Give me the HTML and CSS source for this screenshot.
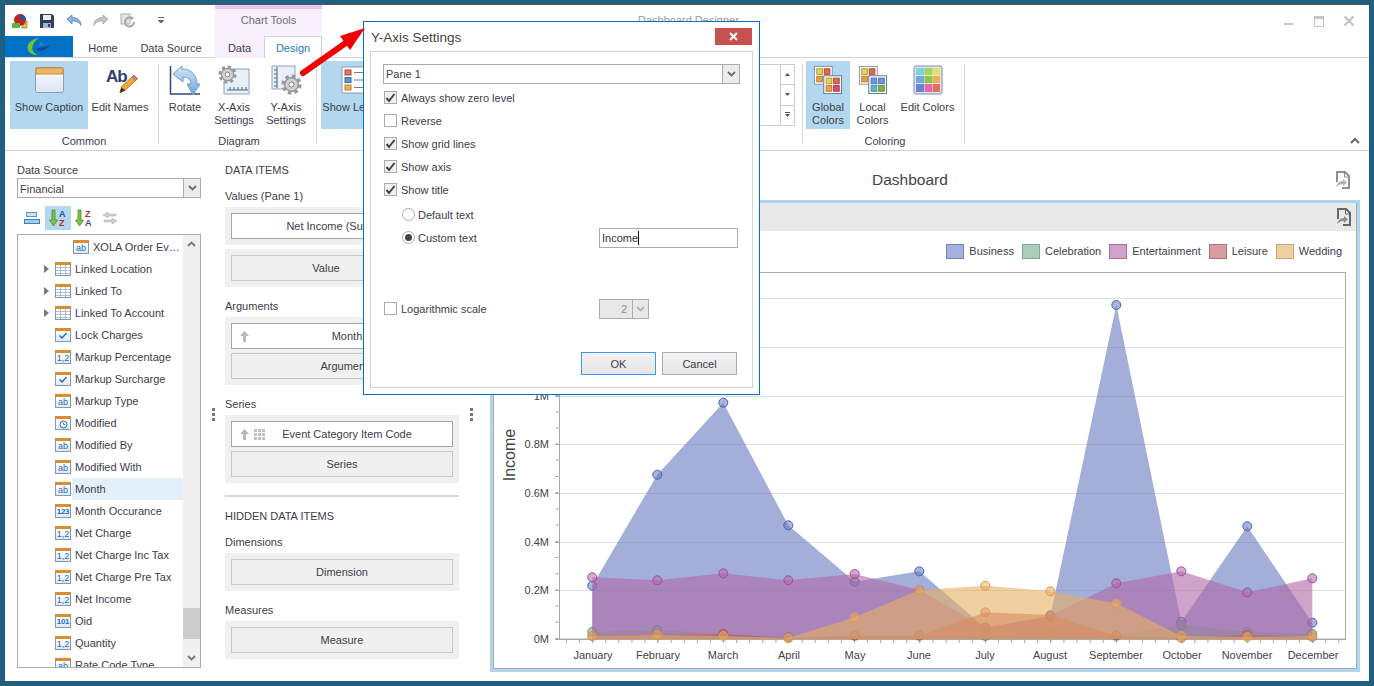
FILE: index.html
```html
<!DOCTYPE html>
<html lang="en">
<head>
    <meta charset="UTF-8">
    <title>Dashboard Designer</title>
    <link rel="stylesheet" href="styles.css">
</head>
<body>

<svg class="defs" width="0" height="0">
    <defs>
        <linearGradient id="gBlue" x1="0" y1="0" x2="0" y2="1"><stop offset="0" stop-color="#d6e6f7"/><stop offset="1" stop-color="#6fa5dc"/></linearGradient>
        <linearGradient id="gWin" x1="0" y1="0" x2="0" y2="1"><stop offset="0" stop-color="#fff"/><stop offset="1" stop-color="#dbe3f2"/></linearGradient>
        <symbol id="gear" viewBox="0 0 24 24">
            <circle cx="12" cy="12" r="8" fill="#b4b4b4" stroke="#7d7d7d"/>
            <circle cx="12" cy="12" r="9.5" fill="none" stroke="#999" stroke-width="4" stroke-dasharray="4 3.46"/>
            <circle cx="12" cy="12" r="6.5" fill="#d2d2d2"/>
            <circle cx="12" cy="12" r="3" fill="#f4f4f4" stroke="#777"/>
        </symbol>
        <symbol id="export" viewBox="0 0 16 18">
            <path d="M2 11V1h8l4 4v12H7" fill="none" stroke="currentColor" stroke-width="2"/>
            <path d="M9.500 1v5h5" fill="none" stroke="currentColor"/>
            <path d="M1 16c1-4 4-6 7-6V8l4 3.500-4 3.500v-2c-3 0-5 1-7 3z" fill="currentColor" opacity=".7"/>
        </symbol>
    </defs>
</svg>

<div class="window">

    <div class="titlebar">
        <div class="qat">
            <svg class="qat-icon" viewBox="0 0 16 16"><circle cx="8" cy="7" r="6" fill="#c8201c"/><path d="M8 7V1a6 6 0 0 1 6 6z" fill="#2d4fa8"/><path d="M1 10h7v5H3a2.500 2.500 0 0 1-2-5z" fill="#58b347"/><path d="M9 15l6-7v7z" fill="#e9c046" stroke="#8a6a18" stroke-width=".6"/></svg>
            <svg class="qat-icon" viewBox="0 0 16 16"><path d="M1 1h12l2 2v12H1z" fill="#2f3f5c"/><rect x="4" y="2" width="8" height="5" fill="#e9eef5"/><rect x="4" y="10" width="8" height="5" fill="#a8b4c6"/><rect x="9" y="11" width="2" height="3" fill="#2f3f5c"/></svg>
            <svg class="qat-icon" viewBox="0 0 16 16"><path d="M1 6l5-4v2.500c5 0 9 2.500 9 8-1.500-3-4-4.500-9-4.500V11z" fill="#8db5dd" stroke="#4f82b5" stroke-width=".8"/></svg>
            <svg class="qat-icon" viewBox="0 0 16 16"><path d="M15 6l-5-4v2.500c-5 0-9 2.500-9 8 1.500-3 4-4.500 9-4.500V11z" fill="#c4c4c4" stroke="#a5a5a5" stroke-width=".8"/></svg>
            <svg class="qat-icon" viewBox="0 0 16 16"><rect x="1" y="1" width="9" height="10" fill="#e4e4e4" stroke="#b0b0b0"/><path d="M14 9a4.500 4.500 0 1 1-2-3.700" fill="none" stroke="#a8a8a8" stroke-width="2"/><path d="M10 3l4 1.500-2.500 3z" fill="#a8a8a8"/></svg>
            <svg class="qat-more" viewBox="0 0 8 7"><path d="M1 .5h6" stroke="#666"/><path d="M.5 3h7L4 6.500z" fill="#666"/></svg>
        </div>
        <div class="context-head">Chart Tools</div>
        <div class="app-title">Dashboard Designer</div>
        <div class="win-controls">
            <svg viewBox="0 0 12 12"><rect x="1" y="8" width="9" height="2" fill="#c4c4c4"/></svg>
            <svg viewBox="0 0 12 12"><rect x="1.500" y="1.500" width="9" height="10" fill="none" stroke="#c4c4c4"/><rect x="1" y="1" width="10" height="3" fill="#c4c4c4"/></svg>
            <svg viewBox="0 0 12 12"><path d="M1.500 1.500l9 9M10.500 1.500l-9 9" stroke="#c4c4c4" stroke-width="2.400"/></svg>
        </div>
    </div>

    <div class="tabs">
        <div class="app-logo">
            <svg width="26" height="18" viewBox="0 0 26 18"><path d="M13 0C5 1 0 6 2 12c1 3 5 5 10 5C7 15 5 11 7 7c1-3 3-5 6-7z" fill="#6fc23a"/><path d="M11 10c4 0 9-1 13-3-2 4-8 6-13 6z" fill="#17458f"/><path d="M14 4l5 3-6 1z" fill="#2c7fc4"/></svg>
        </div>
        <div class="tab tab-home">Home</div>
        <div class="tab tab-source">Data Source</div>
        <div class="tab tab-data">Data</div>
        <div class="tab tab-design">Design</div>
    </div>

    <div class="ribbon">
        <div class="rgroup rgroup-common">
            <div class="rbuttons">
                <div class="rbtn on w78">
                    <svg class="ricon" viewBox="0 0 32 30"><rect x="2.500" y="2.500" width="28" height="25" rx="2" fill="url(#gWin)" stroke="#8f9cb8"/><rect x="3" y="3" width="27" height="6" fill="#efb765" stroke="#c98d33"/></svg>
                    <span>Show Caption</span>
                </div>
                <div class="rbtn w64">
                    <div class="ab-icon"><b>Ab</b>
                        <svg viewBox="0 0 22 22"><path d="M17 1l4 4L7 18l-6 3 2-7z" fill="#f2a93b" stroke="#a5671b"/><path d="M17 1l4 4-2 2-4-4z" fill="#d98888" stroke="#8a5252" stroke-width=".7"/><path d="M1 21l2-6 4 3z" fill="#3a2a1a"/></svg>
                    </div>
                    <span>Edit Names</span>
                </div>
            </div>
            <div class="rlabel">Common</div>
        </div>
        <div class="rsep"></div>
        <div class="rgroup rgroup-diagram">
            <div class="rbuttons">
                <div class="rbtn w46">
                    <svg class="ricon" viewBox="0 0 32 30"><path d="M1.500 1v28h29.500" fill="none" stroke="#33477a" stroke-width="1.500"/><path d="M4 9l9-8v3c9 0 15 6 15 15h3l-7 11-6-11h4c0-4-3-7-8-7v5z" fill="url(#gBlue)" stroke="#6d9fcb"/></svg>
                    <span>Rotate</span>
                </div>
                <div class="rbtn w52">
                    <svg class="ricon" viewBox="0 0 32 30"><rect x="6" y="4" width="25" height="25" fill="#e9eff7" stroke="#8fa2bb"/><path d="M9 25h21M12 25v-3M16 25v-3M20 25v-3M24 25v-3M28 25v-3" stroke="#4d6684" fill="none"/><use href="#gear" x="0" y="0" width="19" height="19"/></svg>
                    <span>X-Axis<br>Settings</span>
                </div>
                <div class="rbtn w52">
                    <svg class="ricon" viewBox="0 0 32 30"><rect x="2" y="1" width="23" height="23" fill="#e9eff7" stroke="#8fa2bb"/><path d="M7 2v21M7 5H4M7 9H4M7 13H4M7 17H4M7 21H4" stroke="#4d6684" fill="none"/><use href="#gear" x="11" y="9" width="21" height="21"/></svg>
                    <span>Y-Axis<br>Settings</span>
                </div>
            </div>
            <div class="rlabel">Diagram</div>
        </div>
        <div class="rsep"></div>
        <div class="rgroup rgroup-layout">
            <div class="rbuttons">
                <div class="rbtn on w70">
                    <svg class="ricon" viewBox="0 0 32 30"><rect x="2" y="2" width="28" height="26" fill="#fff" stroke="#8f9cb8"/><rect x="5" y="5" width="6" height="5" fill="#e2786a" stroke="#a64a3f"/><rect x="5" y="12.500" width="6" height="5" fill="#5c97d6" stroke="#386ca6"/><rect x="5" y="20" width="6" height="5" fill="#eeb054" stroke="#b27f2e"/><path d="M14 7.500h12M14 15h12M14 22.500h12" stroke="#6d7f9c"/></svg>
                    <span>Show Legend</span>
                </div>
                <div class="gallery">
                    <div class="gallery-item">
                        <svg width="22" height="32" viewBox="0 0 22 32"><rect x=".5" y=".5" width="21" height="30" fill="#cfe2f5" stroke="#7f9ec4"/><path d="M1 30V18L14 10l7-7v27z" fill="#8dbbe6"/></svg>
                    </div>
                    <div class="gallery-spin">
                        <div><svg width="5" height="3" viewBox="0 0 5 3"><path d="M0 3h5L2.500 0z" fill="#555"/></svg></div>
                        <div><svg width="5" height="3" viewBox="0 0 5 3"><path d="M0 0h5L2.500 3z" fill="#555"/></svg></div>
                        <div><svg width="5" height="6" viewBox="0 0 5 6"><path d="M0 .5h5" stroke="#555"/><path d="M0 2h5L2.500 5z" fill="#555"/></svg></div>
                    </div>
                </div>
            </div>
            <div class="rlabel">&nbsp;</div>
        </div>
        <div class="rsep"></div>
        <div class="rgroup rgroup-coloring">
            <div class="rbuttons">
                <div class="rbtn on w44">
                    <svg class="ricon" viewBox="0 0 32 32"><rect x="1.500" y="1.500" width="19" height="19" fill="#fff" stroke="#7f90b5"/><rect x="4" y="4" width="6" height="6" fill="#e6d25a" stroke="#aa9a35"/><rect x="12" y="4" width="6" height="6" fill="#e2694d" stroke="#ad4a33"/><rect x="4" y="12" width="6" height="6" fill="#e9a043" stroke="#b27a2d"/><rect x="11.500" y="11.500" width="19" height="19" fill="#fff" stroke="#5c6f98"/><rect x="14" y="14" width="6" height="6" fill="#e6d25a" stroke="#aa9a35"/><rect x="22" y="14" width="6" height="6" fill="#e2694d" stroke="#ad4a33"/><rect x="14" y="22" width="6" height="6" fill="#e9a043" stroke="#b27a2d"/><rect x="22" y="22" width="6" height="6" fill="#dc4d6a" stroke="#a53850"/></svg>
                    <span>Global<br>Colors</span>
                </div>
                <div class="rbtn w45">
                    <svg class="ricon" viewBox="0 0 32 32"><rect x="1.500" y="1.500" width="19" height="19" fill="#fff" stroke="#7f90b5"/><rect x="4" y="4" width="6" height="6" fill="#e6d25a" stroke="#aa9a35"/><rect x="12" y="4" width="6" height="6" fill="#e2694d" stroke="#ad4a33"/><rect x="4" y="12" width="6" height="6" fill="#e9a043" stroke="#b27a2d"/><rect x="11.500" y="11.500" width="19" height="19" fill="#fff" stroke="#5c6f98"/><rect x="14" y="14" width="6" height="6" fill="#6e97d8" stroke="#4a6da8"/><rect x="22" y="14" width="6" height="6" fill="#6e97d8" stroke="#4a6da8"/><rect x="14" y="22" width="6" height="6" fill="#55bccb" stroke="#3a8e9b"/><rect x="22" y="22" width="6" height="6" fill="#8ab24c" stroke="#658735"/></svg>
                    <span>Local<br>Colors</span>
                </div>
                <div class="rbtn w65">
                    <svg class="ricon" viewBox="0 0 30 30"><rect x="1" y="1" width="28" height="28" rx="2" fill="#dfe4ee" stroke="#7f8db0"/><rect x="3" y="3" width="8" height="7" fill="#7dd3e0"/><rect x="11.500" y="3" width="8" height="7" fill="#a4d65e"/><rect x="20" y="3" width="7" height="7" fill="#e9de6a"/><rect x="3" y="11" width="8" height="7" fill="#72a9e0"/><rect x="11.500" y="11" width="8" height="7" fill="#8dc63f"/><rect x="20" y="11" width="7" height="7" fill="#f0b04f"/><rect x="3" y="19" width="8" height="8" fill="#6387cf"/><rect x="11.500" y="19" width="8" height="8" fill="#e66aa8"/><rect x="20" y="19" width="7" height="8" fill="#e8705a"/></svg>
                    <span>Edit Colors</span>
                </div>
            </div>
            <div class="rlabel">Coloring</div>
        </div>
        <div class="rsep"></div>
        <svg class="collapse" width="10" height="7" viewBox="0 0 10 7"><path d="M1 6l4-4 4 4" fill="none" stroke="#666" stroke-width="2"/></svg>
    </div>

    <div class="content">

        <div class="fields">
            <div class="field-label">Data Source</div>
            <div class="combo">
                <span>Financial</span>
                <div class="combo-btn"><svg width="9" height="6" viewBox="0 0 9 6"><path d="M1 1l3.500 3.500L8 1" fill="none" stroke="#6a6a6a" stroke-width="1.800"/></svg></div>
            </div>
            <div class="tools">
                <div class="tool"><svg width="16" height="14" viewBox="0 0 16 14"><rect x="2.500" y="1.500" width="10" height="4" fill="#cfe3f6" stroke="#5b93cc"/><rect x=".5" y="8.500" width="15" height="4" fill="#a9cdf0" stroke="#3e7fc0"/></svg></div>
                <div class="tool on"><svg width="18" height="18" viewBox="0 0 18 18"><path d="M3 1h3v10h2.500l-4 6-4-6H3z" fill="#7cc24a" stroke="#4d8c2a" stroke-width=".8"/><text x="10" y="8" class="az a">A</text><text x="10" y="17" class="az z">Z</text></svg></div>
                <div class="tool"><svg width="18" height="18" viewBox="0 0 18 18"><path d="M3 1h3v10h2.500l-4 6-4-6H3z" fill="#7cc24a" stroke="#4d8c2a" stroke-width=".8"/><text x="10" y="8" class="az z">Z</text><text x="10" y="17" class="az a">A</text></svg></div>
                <div class="tool"><svg width="16" height="14" viewBox="0 0 16 14"><path d="M1 4l5-3v2h8v2H6v2zM15 10l-5-3v2H2v2h8v2z" fill="#cfcfcf" stroke="#b5b5b5" stroke-width=".6"/></svg></div>
            </div>
            <div class="tree">
                <div class="tree-list">
                    <div class="row deep"><i class="ficon">ab</i><span>XOLA Order Ev…</span></div>
                    <div class="row"><b class="twist"></b><i class="ficon grid"></i><span>Linked Location</span></div>
                    <div class="row"><b class="twist"></b><i class="ficon grid"></i><span>Linked To</span></div>
                    <div class="row"><b class="twist"></b><i class="ficon grid"></i><span>Linked To Account</span></div>
                    <div class="row"><i class="ficon"><svg width="10" height="8" viewBox="0 0 10 8"><path d="M1.500 3.500L4 6l4.500-5" fill="none" stroke="#2a6db5" stroke-width="1.500"/></svg></i><span>Lock Charges</span></div>
                    <div class="row"><i class="ficon">1,2</i><span>Markup Percentage</span></div>
                    <div class="row"><i class="ficon"><svg width="10" height="8" viewBox="0 0 10 8"><path d="M1.500 3.500L4 6l4.500-5" fill="none" stroke="#2a6db5" stroke-width="1.500"/></svg></i><span>Markup Surcharge</span></div>
                    <div class="row"><i class="ficon">ab</i><span>Markup Type</span></div>
                    <div class="row"><i class="ficon"><svg width="9" height="9" viewBox="0 0 9 9"><circle cx="4.500" cy="4.500" r="3.500" fill="none" stroke="#2a6db5"/><path d="M4.500 2.500v2h2" fill="none" stroke="#2a6db5" stroke-width=".8"/></svg></i><span>Modified</span></div>
                    <div class="row"><i class="ficon">ab</i><span>Modified By</span></div>
                    <div class="row"><i class="ficon">ab</i><span>Modified With</span></div>
                    <div class="row picked"><i class="ficon">ab</i><span>Month</span></div>
                    <div class="row"><i class="ficon small">123</i><span>Month Occurance</span></div>
                    <div class="row"><i class="ficon">1,2</i><span>Net Charge</span></div>
                    <div class="row"><i class="ficon">1,2</i><span>Net Charge Inc Tax</span></div>
                    <div class="row"><i class="ficon">1,2</i><span>Net Charge Pre Tax</span></div>
                    <div class="row"><i class="ficon">1,2</i><span>Net Income</span></div>
                    <div class="row"><i class="ficon small">101</i><span>Oid</span></div>
                    <div class="row"><i class="ficon">1,2</i><span>Quantity</span></div>
                    <div class="row"><i class="ficon">ab</i><span>Rate Code Type</span></div>
                </div>
                <div class="scrollbar">
                    <svg width="9" height="6" viewBox="0 0 9 6"><path d="M1 5l3.500-3.500L8 5" fill="none" stroke="#777" stroke-width="1.800"/></svg>
                    <div class="thumb"></div>
                    <svg width="9" height="6" viewBox="0 0 9 6"><path d="M1 1l3.500 3.500L8 1" fill="none" stroke="#777" stroke-width="1.800"/></svg>
                </div>
            </div>
        </div>

        <div class="splitter"><i></i><i></i><i></i></div>

        <div class="items">
            <div class="item-head">DATA ITEMS</div>
            <div class="item-label">Values (Pane 1)</div>
            <div class="drop"><div class="slot filled shift-net">Net Income (Sum)</div></div>
            <div class="drop next"><div class="slot shift-value">Value</div></div>
            <div class="item-label">Arguments</div>
            <div class="drop">
                <div class="slot filled">
                    <svg class="up" viewBox="0 0 9 11"><path d="M4.500 0L9 5H6v6H3V5H0z" fill="#b8b8b8"/></svg>
                    <span class="pad-left">Month</span>
                </div>
                <div class="slot gap"><span class="pad-left">Arguments</span></div>
            </div>
            <div class="item-label">Series</div>
            <div class="drop">
                <div class="slot filled">
                    <svg class="up" viewBox="0 0 9 11"><path d="M4.500 0L9 5H6v6H3V5H0z" fill="#b8b8b8"/></svg>
                    <svg class="dots" viewBox="0 0 11 11"><path d="M0 0h3v3H0zM4 0h3v3H4zM8 0h3v3H8zM0 4h3v3H0zM4 4h3v3H4zM8 4h3v3H8zM0 8h3v3H0zM4 8h3v3H4zM8 8h3v3H8z" fill="#c0c0c0"/></svg>
                    <span class="pad-left">Event Category Item Code</span>
                </div>
                <div class="slot gap">Series</div>
            </div>
            <div class="divider"></div>
            <div class="item-head">HIDDEN DATA ITEMS</div>
            <div class="item-label">Dimensions</div>
            <div class="drop"><div class="slot">Dimension</div></div>
            <div class="item-label">Measures</div>
            <div class="drop"><div class="slot">Measure</div></div>
        </div>

        <div class="splitter"><i></i><i></i><i></i></div>

        <div class="dash">
            <div class="dash-title">
                <span>Dashboard</span>
                <svg class="export light" viewBox="0 0 16 18"><use href="#export"/></svg>
            </div>
            <div class="dash-item">
                <div class="dash-inner">
                    <div class="item-caption"><svg class="export" viewBox="0 0 16 18"><use href="#export"/></svg></div>
                    <div class="legend">
                        <div class="key"><i class="k-bus"></i>Business</div>
                        <div class="key"><i class="k-cel"></i>Celebration</div>
                        <div class="key"><i class="k-ent"></i>Entertainment</div>
                        <div class="key"><i class="k-lei"></i>Leisure</div>
                        <div class="key"><i class="k-wed"></i>Wedding</div>
                    </div>
                    <svg class="chart" width="862" height="397" viewBox="494 271 862 397">
                        <rect x="559.500" y="272.500" width="786" height="366.500" fill="#fff" stroke="#ababab"/>
                        <g stroke="#dedede">
                            <path d="M560 298.500h785M560 347.500h785M560 396.500h785M560 444.500h785M560 493.500h785M560 542.500h785M560 590.500h785"/>
                        </g>
                        <g stroke="#a8a8a8">
                            <path d="M559.500 272v367M559 639.500h787"/>
                            <path d="M555 639.500h4M555 590.500h4M555 542.500h4M555 493.500h4M555 444.500h4M555 396.500h4M555 347.500h4M555 298.500h4"/>
                            <path d="M557 639v-367" stroke-width="3" fill="none" stroke-dasharray="1 15.200"/>
                            <path d="M566 641.500h780" stroke-width="3" fill="none" stroke-dasharray="1 12.090"/>
                        </g>
                        <path d="M592.500 643v-4M657.500 643v-4M723.500 643v-4M788.500 643v-4M854.500 643v-4M919.500 643v-4M985.500 643v-4M1050.500 643v-4M1116.500 643v-4M1181.500 643v-4M1247.500 643v-4M1312.500 643v-4" stroke="#a8a8a8"/>

                        <polygon class="a-bus" points="592.300,639 592.300,585.700 657.300,474.700 723.300,402.700 788.300,525.300 854.700,581.700 919.300,571.300 985.300,627.700 1050.300,616 1116.300,305 1181.300,621.700 1247.300,526.300 1312.300,622.700 1312.300,639"/>
                        <g class="m-bus">
                            <circle cx="592.300" cy="585.700" r="4.500"/><circle cx="657.300" cy="474.700" r="4.500"/><circle cx="723.300" cy="402.700" r="4.500"/><circle cx="788.300" cy="525.300" r="4.500"/><circle cx="854.700" cy="581.700" r="4.500"/><circle cx="919.300" cy="571.300" r="4.500"/><circle cx="985.300" cy="627.700" r="4.500"/><circle cx="1050.300" cy="616" r="4.500"/><circle cx="1116.300" cy="305" r="4.500"/><circle cx="1181.300" cy="621.700" r="4.500"/><circle cx="1247.300" cy="526.300" r="4.500"/><circle cx="1312.300" cy="622.700" r="4.500"/>
                        </g>
                        <polygon class="a-cel" points="592.300,639 592.300,632 657.300,630 723.300,634 788.300,637 854.700,635 919.300,635 985.300,636 1050.300,632 1116.300,635 1181.300,625 1247.300,632 1312.300,634 1312.300,639"/>
                        <g class="m-cel">
                            <circle cx="592.300" cy="632" r="4.500"/><circle cx="657.300" cy="630" r="4.500"/><circle cx="723.300" cy="634" r="4.500"/><circle cx="788.300" cy="637" r="4.500"/><circle cx="854.700" cy="635" r="4.500"/><circle cx="919.300" cy="635" r="4.500"/><circle cx="985.300" cy="636" r="4.500"/><circle cx="1050.300" cy="632" r="4.500"/><circle cx="1116.300" cy="635" r="4.500"/><circle cx="1181.300" cy="625" r="4.500"/><circle cx="1247.300" cy="632" r="4.500"/><circle cx="1312.300" cy="634" r="4.500"/>
                        </g>
                        <polygon class="a-ent" points="592.300,639 592.300,577.300 657.300,580.300 723.300,573.300 788.300,580.300 854.700,574 919.300,590 985.300,627.700 1050.300,616 1116.300,583.300 1181.300,571.300 1247.300,592.300 1312.300,578.300 1312.300,639"/>
                        <g class="m-ent">
                            <circle cx="592.300" cy="577.300" r="4.500"/><circle cx="657.300" cy="580.300" r="4.500"/><circle cx="723.300" cy="573.300" r="4.500"/><circle cx="788.300" cy="580.300" r="4.500"/><circle cx="854.700" cy="574" r="4.500"/><circle cx="919.300" cy="590" r="4.500"/><circle cx="985.300" cy="627.700" r="4.500"/><circle cx="1050.300" cy="616" r="4.500"/><circle cx="1116.300" cy="583.300" r="4.500"/><circle cx="1181.300" cy="571.300" r="4.500"/><circle cx="1247.300" cy="592.300" r="4.500"/><circle cx="1312.300" cy="578.300" r="4.500"/>
                        </g>
                        <polygon class="a-lei" points="592.300,639 592.300,636 657.300,635 723.300,634 788.300,638 854.700,636 919.300,636 985.300,612.300 1050.300,615 1116.300,636 1181.300,638 1247.300,635 1312.300,637 1312.300,639"/>
                        <g class="m-lei">
                            <circle cx="592.300" cy="636" r="4.500"/><circle cx="657.300" cy="635" r="4.500"/><circle cx="723.300" cy="634" r="4.500"/><circle cx="788.300" cy="638" r="4.500"/><circle cx="854.700" cy="636" r="4.500"/><circle cx="919.300" cy="636" r="4.500"/><circle cx="985.300" cy="612.300" r="4.500"/><circle cx="1050.300" cy="615" r="4.500"/><circle cx="1116.300" cy="636" r="4.500"/><circle cx="1181.300" cy="638" r="4.500"/><circle cx="1247.300" cy="635" r="4.500"/><circle cx="1312.300" cy="637" r="4.500"/>
                        </g>
                        <polygon class="a-wed" points="592.300,639 592.300,636 657.300,635 723.300,636 788.300,638 854.700,617.300 919.300,590 985.300,585.700 1050.300,591.300 1116.300,603.300 1181.300,636 1247.300,637 1312.300,636 1312.300,639"/>
                        <g class="m-wed">
                            <circle cx="592.300" cy="636" r="4.500"/><circle cx="657.300" cy="635" r="4.500"/><circle cx="723.300" cy="636" r="4.500"/><circle cx="788.300" cy="638" r="4.500"/><circle cx="854.700" cy="617.300" r="4.500"/><circle cx="919.300" cy="590" r="4.500"/><circle cx="985.300" cy="585.700" r="4.500"/><circle cx="1050.300" cy="591.300" r="4.500"/><circle cx="1116.300" cy="603.300" r="4.500"/><circle cx="1181.300" cy="636" r="4.500"/><circle cx="1247.300" cy="637" r="4.500"/><circle cx="1312.300" cy="636" r="4.500"/>
                        </g>

                        <g class="y-labels">
                            <text x="549" y="643">0M</text><text x="549" y="594">0.2M</text><text x="549" y="546">0.4M</text><text x="549" y="497">0.6M</text><text x="549" y="448">0.8M</text><text x="549" y="400">1M</text>
                        </g>
                        <g class="x-labels">
                            <text x="593" y="659">January</text><text x="658" y="659">February</text><text x="723" y="659">March</text><text x="789" y="659">April</text><text x="855" y="659">May</text><text x="919" y="659">June</text><text x="985" y="659">July</text><text x="1050" y="659">August</text><text x="1116" y="659">September</text><text x="1182" y="659">October</text><text x="1247" y="659">November</text><text x="1313" y="659">December</text>
                        </g>
                        <text class="y-title" transform="translate(515 455) rotate(-90)">Income</text>
                    </svg>
                </div>
            </div>
        </div>
    </div>
</div>

<svg class="callout" width="70" height="54" viewBox="298 24 70 54"><path d="M303 73l47-33" stroke="#f00000" stroke-width="6" stroke-linecap="round"/><path d="M365 28l-25 8 10 14z" fill="#f00000"/></svg>

<div class="dialog">
    <div class="dialog-head">
        <span>Y-Axis Settings</span>
        <div class="dialog-close"><svg width="9" height="9" viewBox="0 0 9 9"><path d="M1 1l7 7M8 1L1 8" stroke="#fff" stroke-width="2"/></svg></div>
    </div>
    <div class="dialog-body">
        <div class="combo wide">
            <span>Pane 1</span>
            <div class="combo-btn"><svg width="9" height="6" viewBox="0 0 9 6"><path d="M1 1l3.500 3.500L8 1" fill="none" stroke="#6a6a6a" stroke-width="1.800"/></svg></div>
        </div>
        <div class="check-row first"><i class="check on"><svg width="11" height="10" viewBox="0 0 11 10"><path d="M1.500 5L4 8l5.500-7" fill="none" stroke="#444" stroke-width="2"/></svg></i>Always show zero level</div>
        <div class="check-row"><i class="check"></i>Reverse</div>
        <div class="check-row"><i class="check on"><svg width="11" height="10" viewBox="0 0 11 10"><path d="M1.500 5L4 8l5.500-7" fill="none" stroke="#444" stroke-width="2"/></svg></i>Show grid lines</div>
        <div class="check-row"><i class="check on"><svg width="11" height="10" viewBox="0 0 11 10"><path d="M1.500 5L4 8l5.500-7" fill="none" stroke="#444" stroke-width="2"/></svg></i>Show axis</div>
        <div class="check-row"><i class="check on"><svg width="11" height="10" viewBox="0 0 11 10"><path d="M1.500 5L4 8l5.500-7" fill="none" stroke="#444" stroke-width="2"/></svg></i>Show title</div>
        <div class="radio-row default"><i class="radio"></i>Default text</div>
        <div class="radio-row">
            <i class="radio on"></i>Custom text
            <div class="text-input">Income<b class="caret"></b></div>
        </div>
        <div class="check-row log">
            <i class="check"></i>Logarithmic scale
            <div class="spin">
                <span>2</span>
                <div class="spin-btn"><svg width="9" height="6" viewBox="0 0 9 6"><path d="M1 1l3.500 3.500L8 1" fill="none" stroke="#b5b5b5" stroke-width="1.800"/></svg></div>
            </div>
        </div>
        <div class="dialog-buttons">
            <div class="dlg-btn default-btn">OK</div>
            <div class="dlg-btn">Cancel</div>
        </div>
    </div>
</div>

</body>
</html>
```

FILE: styles.css
```css
* {
    box-sizing: border-box;
}

body {
    margin: 0;
    padding: 4px 5px 5px;
    height: 686px;
    overflow: hidden;
    background: #1f5f7f;
    font-family: "Liberation Sans", Arial, sans-serif;
    font-size: 11px;
    color: #3d3d4a;
}

.defs {
    position: absolute;
}

.window {
    height: 677px;
    background: #fff;
    border-top: 1px solid #555;
}

/* title bar */
.titlebar {
    display: flex;
    height: 31px;
}

.qat {
    display: flex;
    align-items: center;
    width: 210px;
    padding-left: 7px;
}

.qat-icon {
    width: 16px;
    height: 16px;
    margin-right: 11px;
}

.qat-more {
    width: 8px;
    height: 7px;
    margin-left: 10px;
}

.context-head {
    width: 107px;
    background: #f8f0fd;
    border-top: 4px solid #e3c6f2;
    text-align: center;
    line-height: 22px;
    color: #6e6e78;
}

.app-title {
    width: 961px;
    padding-left: 316px;
    line-height: 30px;
    color: #9a9a9a;
}

.win-controls {
    display: flex;
    align-items: center;
    gap: 18px;
}

.win-controls svg {
    flex: none;
    width: 12px;
    height: 12px;
}

/* tabs */
.tabs {
    display: flex;
    height: 22px;
    border-bottom: 1px solid #d2d2d2;
}

.app-logo {
    display: flex;
    align-items: center;
    justify-content: center;
    width: 68px;
    background: #0072c6;
}

.tab {
    text-align: center;
    line-height: 24px;
    height: 22px;
}

.tab-home {
    width: 60px;
}

.tab-source {
    width: 76px;
}

.tab-data {
    width: 49px;
    margin-left: 6px;
    background: #f8f0fd;
}

.tab-design {
    width: 58px;
    background: #fff;
    border: 1px solid #d2d2d2;
    border-bottom: 0;
    color: #2b79c2;
    line-height: 22px;
}

/* ribbon */
.ribbon {
    display: flex;
    height: 93px;
    border-bottom: 1px solid #d2d2d2;
}

.rgroup {
    padding-top: 3px;
    height: 92px;
}

.rgroup-common {
    width: 153px;
    padding-left: 5px;
}

.rgroup-diagram {
    width: 157px;
    padding-left: 3px;
}

.rgroup-layout {
    width: 485px;
    padding-left: 4px;
}

.rgroup-coloring {
    width: 161px;
    padding-left: 3px;
}

.rbuttons {
    display: flex;
    height: 68px;
}

.rgroup-layout .rbuttons {
    justify-content: space-between;
}

.rlabel {
    text-align: center;
    line-height: 24px;
}

.rsep {
    width: 1px;
    height: 80px;
    margin-top: 6px;
    background: #d9d9d9;
}

.rbtn {
    display: flex;
    flex-direction: column;
    align-items: center;
    padding-top: 4px;
    text-align: center;
    line-height: 13px;
    white-space: nowrap;
}

.rbtn.on {
    background: #b3d7ee;
}

.rbtn span {
    margin-top: 6px;
}

.w44 { width: 44px; }
.w45 { width: 45px; }
.w46 { width: 46px; }
.w52 { width: 52px; }
.w64 { width: 64px; }
.w65 { width: 65px; }
.w70 { width: 70px; }
.w78 { width: 78px; }

.ricon {
    width: 32px;
    height: 30px;
}

.ab-icon {
    display: flex;
    width: 36px;
    height: 30px;
    padding-left: 4px;
    font-size: 17px;
    letter-spacing: -1px;
    color: #2f3f66;
    line-height: 24px;
}

.ab-icon svg {
    width: 22px;
    height: 22px;
    margin: 8px 0 0 -8px;
}

.gallery {
    display: flex;
    width: 60px;
    height: 62px;
    margin: 3px 7px 0 auto;
    border: 1px solid #ccc;
    border-left: 0;
}

.gallery-item {
    flex: 1;
    padding-top: 15px;
}

.gallery-spin {
    display: flex;
    flex-direction: column;
    width: 14px;
    border-left: 1px solid #ccc;
}

.gallery-spin div {
    flex: 1;
    display: flex;
    align-items: center;
    justify-content: center;
    border-bottom: 1px solid #ccc;
}

.gallery-spin div:last-child {
    border-bottom: 0;
}

.collapse {
    margin: 79px 0 0 385px;
}

/* main area */
.content {
    display: flex;
    height: 530px;
}

.fields {
    width: 184px;
    margin-left: 12px;
    padding-top: 12px;
}

.field-label {
    height: 15px;
    line-height: 14px;
}

.combo {
    display: flex;
    align-items: center;
    justify-content: space-between;
    height: 20px;
    padding-left: 2px;
    background: #fff;
    border: 1px solid #ababab;
}

.fields .combo span {
    padding-top: 1px;
}

.combo-btn {
    display: flex;
    align-items: center;
    justify-content: center;
    width: 17px;
    height: 18px;
    background: #ececec;
    border-left: 1px solid #ababab;
}

.tools {
    display: flex;
    height: 24px;
    margin-top: 8px;
    padding-left: 2px;
}

.tool {
    display: flex;
    align-items: center;
    justify-content: center;
    width: 26px;
}

.tool.on {
    background: #b3d7ee;
}

.az {
    font-size: 9px;
    font-weight: bold;
}

.az.a {
    fill: #2f4f9f;
}

.az.z {
    fill: #b5302a;
}

.tree {
    display: flex;
    height: 434px;
    margin-top: 4px;
    border: 1px solid #ababab;
    overflow: hidden;
}

.tree-list {
    width: 165px;
    padding-top: 1px;
    overflow: hidden;
}

.row {
    display: flex;
    align-items: center;
    position: relative;
    height: 22px;
    padding-left: 37px;
    white-space: nowrap;
}

.row.deep {
    padding-left: 55px;
}

.row span {
    flex: 1;
    height: 22px;
    margin-left: 1px;
    padding-left: 3px;
    line-height: 23px;
    overflow: hidden;
}

.row.picked span {
    background: #e3f0fa;
}

.twist {
    position: absolute;
    left: 26px;
    top: 7px;
    border-left: 5px solid #7a7a7a;
    border-top: 4px solid transparent;
    border-bottom: 4px solid transparent;
}

.ficon {
    display: flex;
    align-items: center;
    justify-content: center;
    flex: none;
    width: 16px;
    height: 14px;
    background: linear-gradient(#fff, #dfe9f5);
    border: 1px solid #7d98bd;
    border-top: 3px solid #e08b2e;
    font-style: normal;
    font-size: 9px;
    line-height: 10px;
    color: #2a6db5;
}

.ficon.small {
    font-size: 8px;
    font-weight: bold;
    letter-spacing: -.3px;
}

.ficon.grid {
    position: relative;
    background: repeating-linear-gradient(#fff 0 2px, #a9bfdc 2px 3px);
}

.ficon.grid::after {
    content: "";
    position: absolute;
    left: 0;
    right: 0;
    top: 0;
    bottom: 0;
    background: repeating-linear-gradient(90deg, transparent 0 4px, #a9bfdc 4px 5px);
}

.scrollbar {
    display: flex;
    flex-direction: column;
    align-items: center;
    justify-content: space-between;
    flex: 1;
    padding: 6px 0;
    background: #f0f0f0;
}

.thumb {
    width: 100%;
    height: 31px;
    margin-top: 345px;
    background: #cbcbcb;
}

.splitter {
    display: flex;
    flex-direction: column;
    align-items: center;
    gap: 2px;
    width: 24px;
    padding-top: 257px;
}

.splitter i {
    width: 3px;
    height: 3px;
    background: #777;
}

.items {
    width: 234px;
}

.item-head,
.item-label {
    margin-top: 12px;
    line-height: 14px;
}

.drop {
    margin-top: 4px;
    padding: 6px;
    background: #f0f0f0;
}

.slot {
    display: flex;
    align-items: center;
    justify-content: center;
    position: relative;
    height: 26px;
    border: 1px solid #c8c8c8;
}

.slot.filled {
    background: #fff;
    border-color: #a6a6a6;
}

.slot.gap {
    margin-top: 4px;
}

.up {
    position: absolute;
    left: 8px;
    top: 7px;
    width: 9px;
    height: 11px;
}

.dots {
    position: absolute;
    left: 22px;
    top: 7px;
    width: 11px;
    height: 11px;
}

.pad-left {
    padding-left: 10px;
}

.shift-net {
    padding-right: 22px;
}

.shift-value {
    padding-right: 32px;
}

.divider {
    height: 2px;
    margin-top: 12px;
    background: #d9d9d9;
}

.dash {
    width: 870px;
    margin-left: 7px;
}

.dash-title {
    display: flex;
    align-items: center;
    height: 49px;
    padding: 8px 9px 0 382px;
    font-size: 15.500px;
    color: #444;
}

.export {
    width: 16px;
    height: 18px;
    margin-left: auto;
    color: #666;
}

.export.light {
    color: #8f8f8f;
}

.dash-item {
    height: 472px;
    border: 3px solid #b0d4ee;
}

.dash-inner {
    height: 466px;
    border: 1px solid #ababab;
    border-top: 0;
}

.item-caption {
    display: flex;
    align-items: center;
    height: 28px;
    padding-right: 4px;
    background: #e9e9e9;
}

.legend {
    display: flex;
    align-items: center;
    justify-content: flex-end;
    gap: 8px;
    height: 40px;
    padding-right: 14px;
}

.key {
    display: flex;
    align-items: center;
}

.key i {
    width: 18px;
    height: 15px;
    margin-right: 5px;
    border: 1px solid;
}

.k-bus { background: #a4b1dc; border-color: #7285bf !important; }
.k-cel { background: #a9cdb9; border-color: #7ea794 !important; }
.k-ent { background: #d0a4ca; border-color: #a8709f !important; }
.k-lei { background: #da9c9e; border-color: #b76f72 !important; }
.k-wed { background: #f2cfa1; border-color: #c9a679 !important; }

.chart {
    display: block;
}

.chart text {
    font-family: "Liberation Sans", Arial, sans-serif;
    font-size: 11px;
    fill: #444;
}

.y-labels text {
    text-anchor: end;
}

.x-labels text {
    text-anchor: middle;
}

.chart .y-title {
    font-size: 16px;
    text-anchor: middle;
}

.a-bus { fill: #6678c0; fill-opacity: .6; }
.a-cel { fill: #70ac8a; fill-opacity: .6; }
.a-ent { fill: #b167a7; fill-opacity: .6; }
.a-lei { fill: #c15a5d; fill-opacity: .6; }
.a-wed { fill: #e6af62; fill-opacity: .6; }

.m-bus { fill: #6678c0; fill-opacity: .55; stroke: #4a63b5; }
.m-cel { fill: #70ac8a; fill-opacity: .55; stroke: #5b8f72; }
.m-ent { fill: #b167a7; fill-opacity: .55; stroke: #a24f97; }
.m-lei { fill: #c15a5d; fill-opacity: .4; stroke: #b4474b; stroke-opacity: .6; }
.m-wed { fill: #e6af62; fill-opacity: .55; stroke: #dc9c44; }

/* callout arrow drawn on the screenshot */
.callout {
    position: absolute;
    left: 298px;
    top: 24px;
    z-index: 3;
}

/* settings dialog */
.dialog {
    position: absolute;
    left: 363px;
    top: 21px;
    z-index: 2;
    width: 397px;
    height: 374px;
    padding: 0 6px 6px;
    background: #fff;
    border: 1px solid #0072c6;
}

.dialog-head {
    display: flex;
    align-items: flex-start;
    justify-content: space-between;
    height: 29px;
    padding: 6px 1px 0;
    font-size: 13.500px;
    line-height: 20px;
    color: #444;
}

.dialog-close {
    display: flex;
    align-items: center;
    justify-content: center;
    width: 37px;
    height: 17px;
    background: #c75050;
}

.dialog-body {
    height: 337px;
    padding: 12px 12px 0;
    border: 1px solid #d2d2d2;
}

.combo.wide {
    width: 357px;
}

.check-row,
.radio-row {
    display: flex;
    align-items: center;
    height: 23px;
}

.check-row.first {
    margin-top: 2px;
}

.check {
    display: flex;
    align-items: center;
    justify-content: center;
    width: 13px;
    height: 13px;
    margin: 0 4px 0 1px;
    border: 1px solid #ababab;
    background: #fff;
}

.check.on {
    background: #f0f0f0;
}

.radio-row {
    padding-left: 19px;
}

.radio-row.default {
    margin-top: 2px;
}

.radio {
    display: flex;
    align-items: center;
    justify-content: center;
    width: 13px;
    height: 13px;
    margin-right: 3px;
    border: 1px solid #ababab;
    border-radius: 50%;
    background: #fff;
}

.radio.on::after {
    content: "";
    width: 7px;
    height: 7px;
    border-radius: 50%;
    background: #444;
}

.text-input {
    display: flex;
    align-items: center;
    width: 139px;
    height: 20px;
    margin-left: auto;
    margin-right: 2px;
    padding-left: 2px;
    border: 1px solid #ababab;
    color: #333;
}

.caret {
    width: 1px;
    height: 14px;
    background: #111;
}

.check-row.log {
    margin-top: 48px;
}

.spin {
    display: flex;
    align-items: center;
    justify-content: flex-end;
    width: 50px;
    height: 20px;
    margin-left: auto;
    margin-right: 91px;
    background: #e8e8e8;
    border: 1px solid #ababab;
    color: #8f8f8f;
}

.spin span {
    padding-right: 5px;
}

.spin-btn {
    display: flex;
    align-items: center;
    justify-content: center;
    width: 16px;
    height: 18px;
    border-left: 1px solid #ababab;
}

.dialog-buttons {
    display: flex;
    justify-content: flex-end;
    gap: 6px;
    margin-top: 32px;
    padding-right: 3px;
}

.dlg-btn {
    width: 75px;
    height: 23px;
    text-align: center;
    line-height: 22px;
    background: linear-gradient(#f3f3f3, #e5e5e5);
    border: 1px solid #ababab;
}

.default-btn {
    border-color: #3c9ae8;
}
```
